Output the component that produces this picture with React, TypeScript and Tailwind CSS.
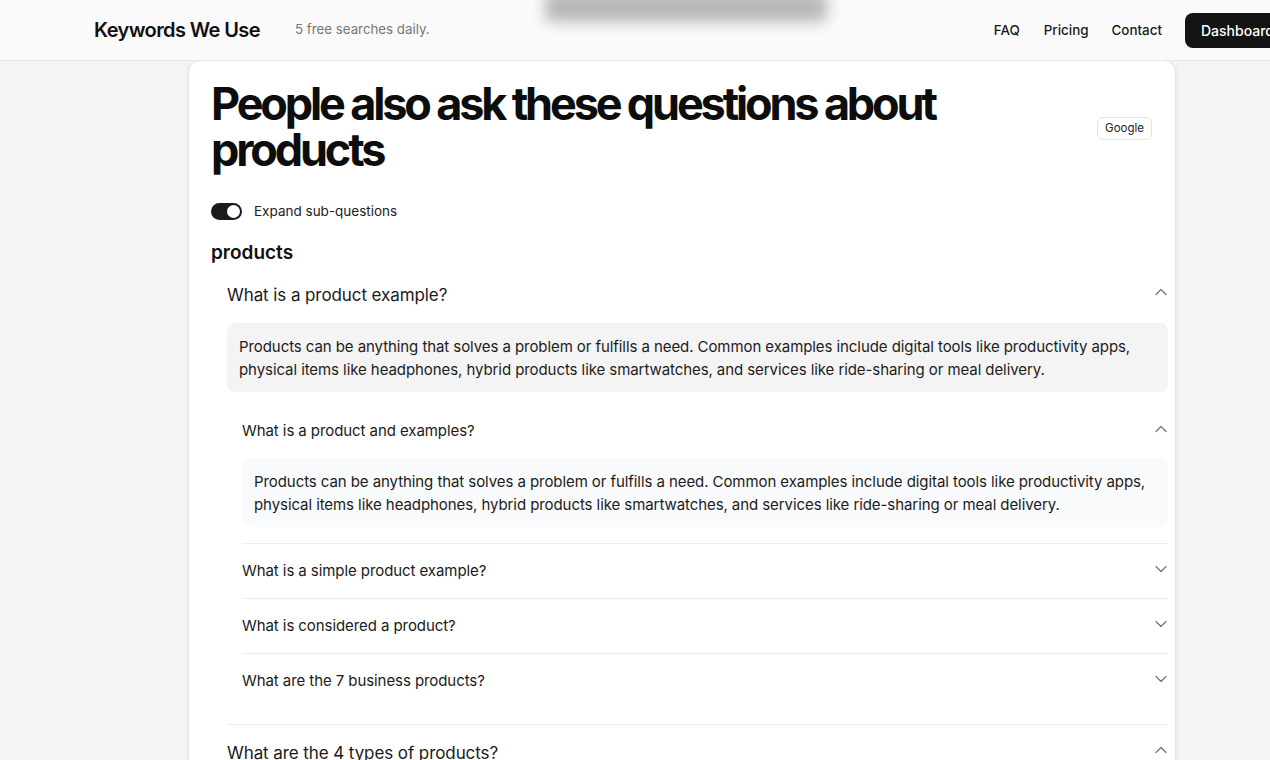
import { ChevronDown, ChevronUp } from "lucide-react";

const subQuestions = [
  "What is a simple product example?",
  "What is considered a product?",
  "What are the 7 business products?",
];

const answer =
  "Products can be anything that solves a problem or fulfills a need. Common examples include digital tools like productivity apps, physical items like headphones, hybrid products like smartwatches, and services like ride-sharing or meal delivery.";

function Header() {
  return (
    <header className="relative h-[61px] border-b border-[#e8e8e8] bg-[#fafafa] flex items-center pl-[94px] overflow-hidden">
      <span className="text-[20px] font-semibold tracking-[-0.03em] text-[#111]">Keywords We Use</span>
      <span className="ml-[35px] text-[13.3px] text-[#777]">5 free searches daily.</span>
      {/* blurred thing behind header */}
      <div className="absolute left-[545px] top-[-8px] h-[30px] w-[282px] rounded-md bg-[#b8b8b8] blur-[7px]" />
      <nav className="ml-auto flex items-center text-[13.4px] text-[#1a1a1a]">
        <a className="mr-[24px] font-medium">FAQ</a>
        <a className="mr-[23px] font-medium">Pricing</a>
        <a className="mr-[23px] font-medium">Contact</a>
        <button className="h-[35px] w-[100px] -mr-[15px] rounded-lg bg-[#141414] pl-[16px] text-left text-[14px] font-medium text-white">
          Dashboard
        </button>
      </nav>
    </header>
  );
}

function SubItem({ q }: { q: string }) {
  return (
    <div className="border-t border-[#ececec] h-[55px] flex items-center justify-between">
      <span className="text-[15px] tracking-[-0.005em] text-[#1a1a1a]">{q}</span>
      <ChevronDown className="-mr-[3px] -mt-[4px] h-[20px] w-[20px] text-[#777]" strokeWidth={1.5} />
    </div>
  );
}

export default function App() {
  return (
    <div className="h-[760px] overflow-hidden bg-[#f4f4f4] font-['Inter',sans-serif]">
      <Header />
      <main className="ml-[188px] w-[988px] -mt-px rounded-t-xl border border-[#e6e6e6] bg-white pl-[22px] pr-[23px] pb-10 shadow-sm">
        <div className="flex items-start justify-between pt-[20px]">
          <h1 className="w-[780px] text-[45px] font-bold leading-[46px] tracking-[-0.07em] text-[#0d0d0d]">
            People also ask these questions about products
          </h1>
          <span className="mt-[36px] rounded-md border border-[#e3e3e3] px-[7px] py-[2px] text-[11.5px] text-[#222]">
            Google
          </span>
        </div>

        <div className="mt-[28px] flex items-center">
          <div className="flex h-[17px] w-[31px] items-center justify-end rounded-full bg-[#1a1a1a] pr-[2px]">
            <div className="h-[13px] w-[13px] rounded-full bg-white" />
          </div>
          <span className="ml-[12px] text-[13.5px] text-[#222]">Expand sub-questions</span>
        </div>

        <h2 className="mt-[18px] text-[19px] font-semibold text-[#111]">products</h2>

        <div className="ml-[16px] mr-[-16px]">
          <div className="mt-[15px] flex items-center justify-between">
            <span className="text-[17px] tracking-[-0.005em] text-[#1a1a1a]">What is a product example?</span>
            <ChevronUp className="-mr-[3px] -mt-[8px] h-[20px] w-[20px] text-[#777]" strokeWidth={1.5} />
          </div>
          <div className="mt-[15px] rounded-lg bg-[#f4f4f4] px-[12px] pt-[12px] pb-[11px] text-[15px] leading-[23px] tracking-[-0.005em] text-[#1c1c1c]">
            {answer}
          </div>

          <div className="ml-[15px] pb-[16px]">
            <div className="mt-[28px] flex items-center justify-between">
              <span className="text-[15px] tracking-[-0.005em] text-[#1a1a1a]">What is a product and examples?</span>
              <ChevronUp className="-mr-[3px] -mt-[6px] h-[20px] w-[20px] text-[#777]" strokeWidth={1.5} />
            </div>
            <div className="mt-[15px] mb-[16px] rounded-lg bg-[#f9fafb] px-[12px] pt-[12px] pb-[11px] text-[15px] leading-[23px] tracking-[-0.005em] text-[#1c1c1c]">
              {answer}
            </div>
            {subQuestions.map((q) => (
              <SubItem key={q} q={q} />
            ))}
          </div>

          <div className="border-t border-[#ececec] pt-[16px] flex items-center justify-between">
            <span className="text-[17px] tracking-[-0.005em] text-[#1a1a1a]">What are the 4 types of products?</span>
            <ChevronUp className="-mr-[3px] -mt-[8px] h-[20px] w-[20px] text-[#777]" strokeWidth={1.5} />
          </div>
        </div>
      </main>
    </div>
  );
}
